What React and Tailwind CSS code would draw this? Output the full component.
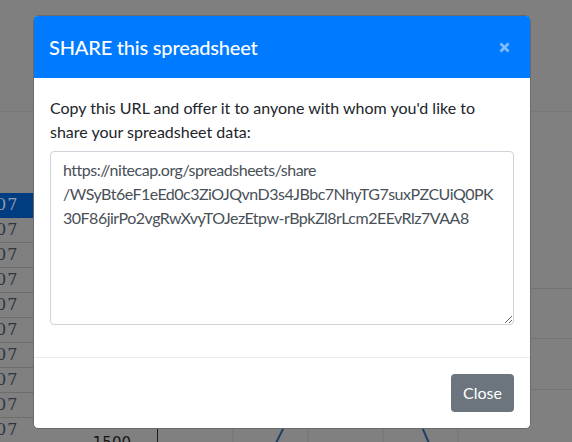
export default function App() {
  const font = { fontFamily: 'Lato, "Open Sans", sans-serif' };
  const rows = Array.from({ length: 10 });
  return (
    <div className="relative h-[442px] w-[572px] overflow-hidden bg-[#808080]" style={font}>
      {/* dimmed page behind the dialog */}
      <div className="h-[112px] border-b border-[#787878] bg-[#7f7f7f]" />
      <div className="flex">
        <div className="w-[33px] pt-[81px]">
          {rows.map((_, i) => (
            <div
              key={i}
              className={
                "flex h-[25px] items-center overflow-hidden border-b text-[16px] leading-none " +
                (i === 0
                  ? "border-[#003d80] bg-[#003d80] text-[#8f9cab]"
                  : "border-[#6c6c6c] text-[#2c3540]")
              }
              style={{ fontFamily: '"DejaVu Serif", serif' }}
            >
              <span className="-ml-[4px] tracking-[1px]">07</span>
            </div>
          ))}
        </div>
        <div className="flex-1">
          <div className="h-[176px]" />
          <div className="h-[50px] border-t border-[#737373]" />
          <div className="h-[51px] border-t border-[#737373]" />
          <div className="h-[38px] border-t border-[#737373]" />
          <div className="flex h-[20px]">
            <div className="w-[124px] pr-[26px] text-right text-[15px] leading-[20px] text-[#151515]" style={{ fontFamily: '"DejaVu Sans", sans-serif' }}>
              <span className="relative top-[6px]">1500</span>
            </div>
            <div className="relative flex-1 border-l border-[#1a1a1a]">
              <svg width="382" height="20" className="block">
                <line x1="75" y1="0" x2="75" y2="20" stroke="#747474" strokeWidth="1" />
                <line x1="150" y1="0" x2="150" y2="20" stroke="#747474" strokeWidth="1" />
                <line x1="225" y1="0" x2="225" y2="20" stroke="#747474" strokeWidth="1" />
                <line x1="300" y1="0" x2="300" y2="20" stroke="#747474" strokeWidth="1" />
                <line x1="126" y1="0" x2="118" y2="16" stroke="#1d3f63" strokeWidth="2" />
                <line x1="264" y1="0" x2="271" y2="16" stroke="#1d3f63" strokeWidth="2" />
              </svg>
            </div>
          </div>
        </div>
      </div>

      {/* dialog */}
      <div className="absolute left-[33px] top-[15px] w-[498px] overflow-hidden rounded-[5px] border border-[#6a6a6a] bg-white">
        <div className="flex items-start justify-between bg-[#007bff] px-4 py-4">
          <h5 className="ml-[-1px] text-[20px] font-medium leading-[30px] tracking-[-0.2px] text-white">SHARE this spreadsheet</h5>
          <button aria-label="Close" className="mr-[4px] mt-[10px] block h-[11px] w-[11px]">
            <svg width="11" height="11" viewBox="0 0 11 11" className="block">
              <path d="M1.5 1.5 L9.5 9.5 M9.5 1.5 L1.5 9.5" stroke="#80bdff" strokeWidth="2.6" strokeLinecap="butt" />
            </svg>
          </button>
        </div>
        <div className="px-4 pb-4 pt-[18px]">
          <p className="mb-[7px] text-[16px] leading-6 text-[#212529]">
            Copy this URL and offer it to anyone with whom you'd like to share your spreadsheet data:
          </p>
          <textarea
            readOnly
            className="mb-4 block h-[174px] w-full resize-y overflow-hidden rounded-[4px] border border-[#ced4da] px-3 py-[6px] text-[16px] leading-6 tracking-[-0.5px] text-[#495057] outline-none"
            style={{ ...font, whiteSpace: "pre" }}
            value={
              "https://nitecap.org/spreadsheets/share\n/WSyBt6eF1eEd0c3ZiOJQvnD3s4JBbc7NhyTG7suxPZCUiQ0PK\n30F86jirPo2vgRwXvyTOJezEtpw-rBpkZl8rLcm2EEvRlz7VAA8"
            }
          />
        </div>
        <div className="flex justify-end border-t border-[#e9ecef] p-4">
          <button className="h-[38px] rounded-[4px] bg-[#6c757d] px-3 text-[16px] leading-6 text-white">Close</button>
        </div>
      </div>
    </div>
  );
}
